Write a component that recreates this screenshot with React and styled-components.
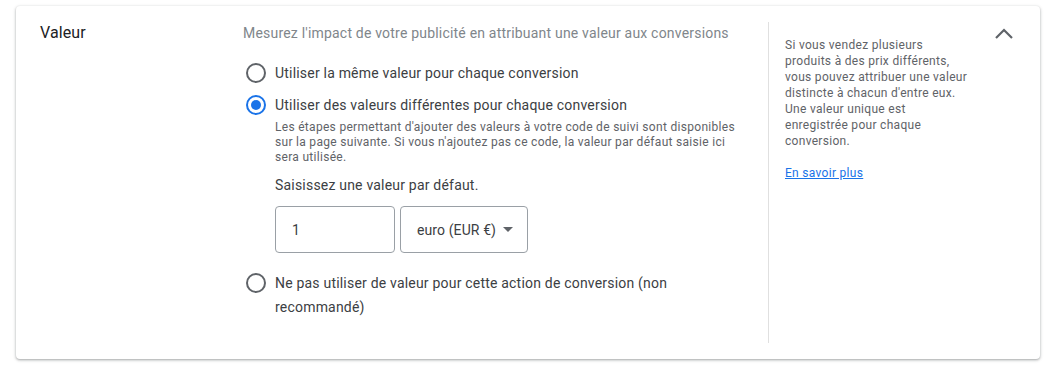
import styled, { createGlobalStyle } from "styled-components";

const GlobalStyle = createGlobalStyle`
    body {
        margin: 0;
        background: #ffffff;
        font-family: Roboto, "Liberation Sans", Arial, sans-serif;
    }
`;

const Page = styled.div`
    padding: 6px 12px 8px 16px;
`;

const Card = styled.section`
    display: flex;
    padding: 16px 24px 16px 24px;
    background: #fff;
    border-radius: 4px;
    box-shadow: 0 1px 2px rgba(60, 64, 67, 0.3), 0 1px 3px 1px rgba(60, 64, 67, 0.15);
`;

const Title = styled.div`
    width: 203px;
    flex-shrink: 0;
    margin-top: 1px;
    font-size: 16px;
    line-height: 20px;
    letter-spacing: 0.1px;
    color: #202124;
`;

const Main = styled.div`
    width: 500px;
    padding-bottom: 24px;
    flex-shrink: 0;
`;

const Description = styled.div`
    margin-top: 1px;
    font-size: 14px;
    line-height: 20px;
    letter-spacing: 0.2px;
    color: #80868b;
`;

const RadioGroup = styled.div`
    display: flex;
    flex-direction: column;
    margin-top: 18px;
`;

const Option = styled.div`
    display: flex;
    align-items: flex-start;
    margin-top: ${(p) => p.$gap || 0}px;
`;

const Circle = styled.span`
    width: 20px;
    height: 20px;
    box-sizing: border-box;
    margin: 2px 9px 0 3px;
    flex-shrink: 0;
    border-radius: 50%;
    border: 2px solid ${(p) => (p.$checked ? "#1a73e8" : "#5f6368")};
    display: flex;
    align-items: center;
    justify-content: center;

    &::after {
        content: "";
        display: ${(p) => (p.$checked ? "block" : "none")};
        width: 10px;
        height: 10px;
        border-radius: 50%;
        background: #1a73e8;
    }
`;

const OptionBody = styled.div`
    flex: 1;
`;

const Label = styled.div`
    font-size: 14px;
    line-height: 24px;
    letter-spacing: 0.2px;
    color: #3c4043;
`;

const Help = styled.div`
    margin-top: 3px;
    font-size: 12px;
    line-height: 15px;
    letter-spacing: 0.3px;
    color: #5f6368;
    padding-right: 4px;
`;

const Prompt = styled.div`
    margin-top: 10px;
    font-size: 14px;
    line-height: 20px;
    letter-spacing: 0.2px;
    color: #3c4043;
`;

const Fields = styled.div`
    display: flex;
    gap: 5px;
    margin-top: 11px;
`;

const Field = styled.div`
    box-sizing: border-box;
    width: ${(p) => p.$width}px;
    height: 47px;
    border: 1px solid #9aa0a6;
    border-radius: 4px;
    display: flex;
    align-items: center;
    padding: 0 ${(p) => p.$padRight || 16}px 0 16px;
    font-size: 14px;
    letter-spacing: 0.1px;
    white-space: nowrap;
    color: #3c4043;
    gap: 6px;
`;

const Caret = styled.span`
    width: 0;
    height: 0;
    flex-shrink: 0;
    border-left: 5px solid transparent;
    border-right: 5px solid transparent;
    border-top: 5px solid #5f6368;
    margin-left: auto;
`;

const Side = styled.aside`
    width: 186px;
    margin-left: 25px;
    padding: 15px 0 0 16px;
    border-left: 1px solid #e0e0e0;
    font-size: 12px;
    line-height: 16px;
    letter-spacing: 0.3px;
    color: #5f6368;
`;

const Link = styled.a`
    display: inline-block;
    margin-top: 16px;
    color: #1a73e8;
    text-decoration: underline;
`;

const Toggle = styled.div`
    margin-left: auto;
    width: 24px;
    height: 24px;
    margin-top: -1px;
    color: #5f6368;
`;

function App() {
    return (
        <>
            <GlobalStyle />
            <Page>
                <Card>
                    <Title>Valeur</Title>
                    <Main>
                        <Description>Mesurez l'impact de votre publicité en attribuant une valeur aux conversions</Description>
                        <RadioGroup>
                            <Option>
                                <Circle />
                                <OptionBody>
                                    <Label>Utiliser la même valeur pour chaque conversion</Label>
                                </OptionBody>
                            </Option>
                            <Option $gap={8}>
                                <Circle $checked />
                                <OptionBody>
                                    <Label>Utiliser des valeurs différentes pour chaque conversion</Label>
                                    <Help>
                                        Les étapes permettant d'ajouter des valeurs à votre code de suivi sont disponibles sur la page suivante. Si vous n'ajoutez pas ce code, la valeur par défaut saisie ici sera utilisée.
                                    </Help>
                                    <Prompt>Saisissez une valeur par défaut.</Prompt>
                                    <Fields>
                                        <Field $width={120}>1</Field>
                                        <Field $width={128} $padRight={14}>
                                            euro (EUR €)
                                            <Caret />
                                        </Field>
                                    </Fields>
                                </OptionBody>
                            </Option>
                            <Option $gap={18}>
                                <Circle />
                                <OptionBody>
                                    <Label>Ne pas utiliser de valeur pour cette action de conversion (non recommandé)</Label>
                                </OptionBody>
                            </Option>
                        </RadioGroup>
                    </Main>
                    <Side>
                        Si vous vendez plusieurs produits à des prix différents, vous pouvez attribuer une valeur distincte à chacun d'entre eux. Une valeur unique est enregistrée pour chaque conversion.
                        <br />
                        <Link href="#">En savoir plus</Link>
                    </Side>
                    <Toggle>
                        <svg width="24" height="24" viewBox="0 0 24 24" fill="none" stroke="currentColor" strokeWidth="2.2">
                            <polyline points="4,17 12,9 20,17" />
                        </svg>
                    </Toggle>
                </Card>
            </Page>
        </>
    );
}

export default App;
